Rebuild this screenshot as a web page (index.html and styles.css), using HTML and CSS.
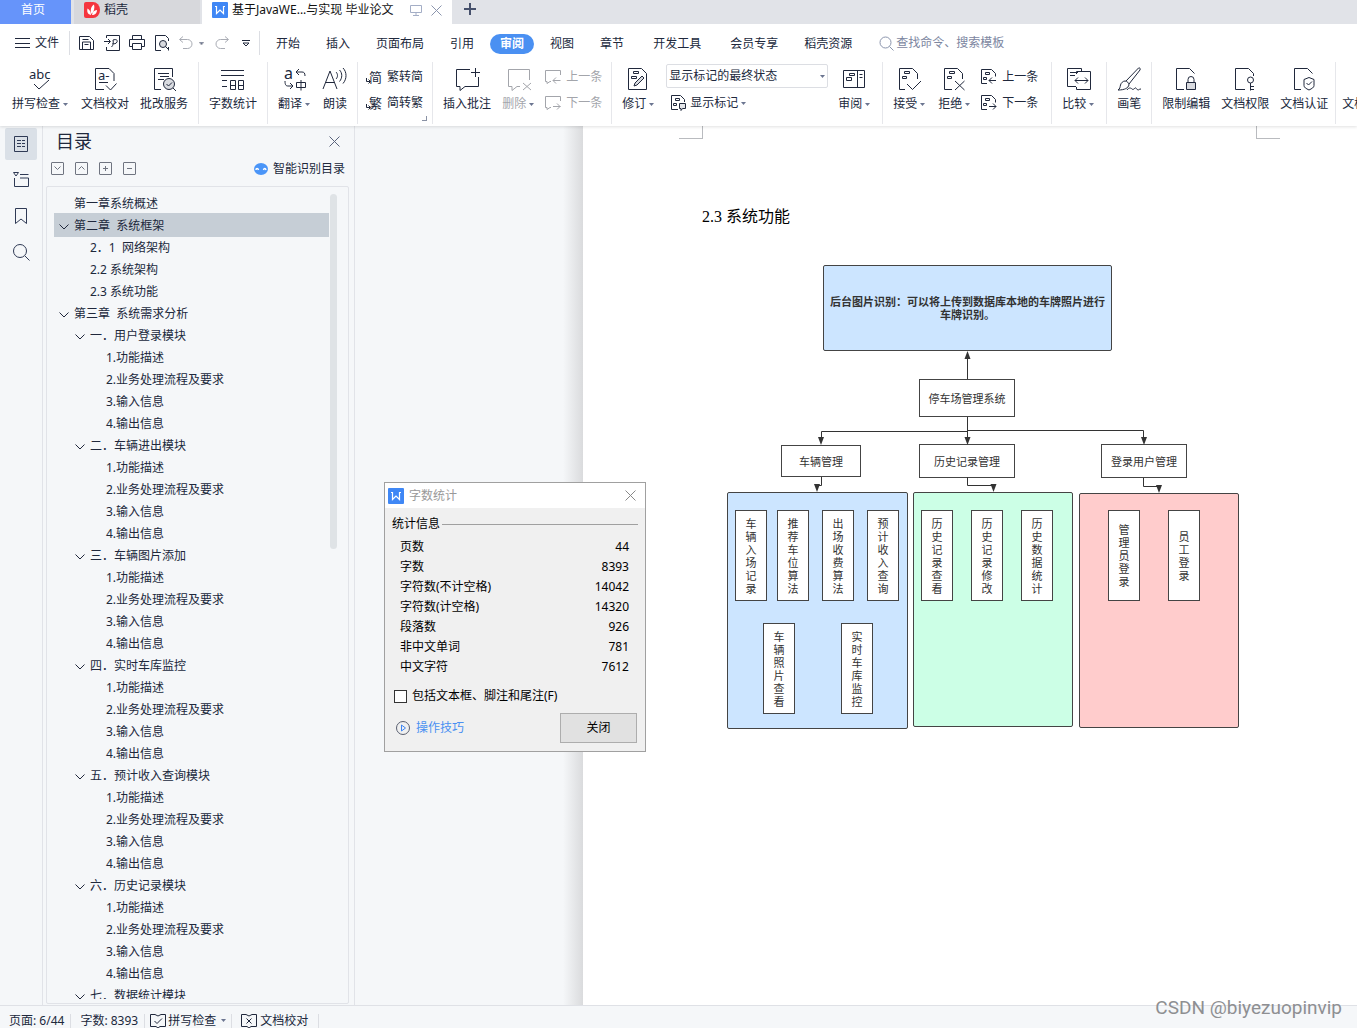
FILE: index.html
```html
<!DOCTYPE html>
<html lang="zh-CN">
<head>
<meta charset="utf-8">
<title>基于JavaWEB 毕业论文</title>
<link rel="stylesheet" href="styles.css">
</head>
<body>
<svg class="defs" aria-hidden="true">
  <symbol id="caret" viewBox="0 0 5 3"><path d="M0 0h5L2.500 3z" fill="#6b7590"/></symbol>
  <symbol id="chev" viewBox="0 0 10 6"><path d="M.5 .5L5 5 9.500 .5"/></symbol>
  <symbol id="x" viewBox="0 0 11 11"><path d="M.5 .5l10 10M10.500 .5l-10 10"/></symbol>
  <symbol id="wps" viewBox="0 0 16 16"><rect width="16" height="16" rx="1" fill="#3f87f5" stroke="none"/><path d="M3 4.500h1.500v7L8 8l3.500 3.500v-7H13" stroke="#fff" stroke-width="1.200"/></symbol>
  <symbol id="prev" viewBox="0 0 16 16"><path d="M6 14.500H.5V.5h10l4 4v3M4.500 3.500h4v2h-4zM2.500 8.500h3v2h-3zM15 11.500H8M11 8.500l-3 3 3 3"/></symbol>
  <symbol id="next" viewBox="0 0 16 16"><path d="M6 14.500H.5V.5h10l4 4v3M4.500 3.500h4v2h-4zM2.500 8.500h3v2h-3zM8 11.500h7M12 8.500l3 3-3 3"/></symbol>
  <symbol id="cprev" viewBox="0 0 16 16"><path d="M6 12.500H5l-3 2v-2H.5v-11h15V6M15.500 11.500H8M11 8.500l-3 3 3 3"/></symbol>
  <symbol id="cnext" viewBox="0 0 16 16"><path d="M6 12.500H5l-3 2v-2H.5v-11h15V6M8 11.500h7.500M12 8.500l3 3-3 3"/></symbol>
</svg>

<header>
  <div class="tabs">
    <button class="tab home">首页</button>
    <button class="tab docer"><svg class="logo" width="16" height="16" viewBox="0 0 16 16"><path d="M0 2a2 2 0 0 1 2-2h7a7 8 0 0 1 0 16H2a2 2 0 0 1-2-2z" fill="#f5363f"/><path d="M7 13C3 12 3 9 3.500 6.500 6 8 7 10 7 13zM7.500 12C6 8 7 4.500 10 2.500c1 3.500 0 7-2.500 9.500zM8 13c.5-3 2-4.500 5-5 0 3-2 5-5 5z" fill="#fff"/></svg>稻壳</button>
    <div class="tab active"><svg width="16" height="16"><use href="#wps"/></svg><span>基于JavaWE...与实现 毕业论文</span>
      <svg class="monitor" width="12" height="12" viewBox="0 0 12 12"><path d="M.5 1.500h11v7H.5zM6 8.500v3M3 11.500h6"/></svg>
      <button class="plain dim" aria-label="关闭标签"><svg width="11" height="11"><use href="#x"/></svg></button></div>
    <button class="plain add" aria-label="新建"><svg width="12" height="12" viewBox="0 0 12 12"><path d="M6 0v12M0 6h12" stroke-width="2"/></svg></button>
  </div>

  <nav class="menu">
    <button class="file"><svg width="15" height="11" viewBox="0 0 15 11"><path d="M0 .5h15M0 5.500h15M0 9.500h15"/></svg><span>文件</span></button>
    <div class="quick">
      <button aria-label="保存"><svg width="16" height="16" viewBox="0 0 16 16"><path d="M.5 1.500h10l4 4v9H.5zM3.500 14v-7h8v7M3.500 4.500h6M5.500 9.500h4"/></svg></button>
      <button aria-label="输出为PDF"><svg width="16" height="16" viewBox="0 0 16 16"><path d="M2.500 3V.5h13v15h-13V12M0 6.500h6M4 4l2.500 2.500L4 9M7.500 12c2-2 2-4 1.500-7 3-1 5 0 4 2s-3 2-4.500 1.500"/></svg></button>
      <button aria-label="打印"><svg width="16" height="16" viewBox="0 0 16 16"><path d="M3.500 4.500v-4h9v4M3.500 11.500h-3v-7h15v7h-3M3.500 8.500h9v6h-9z"/></svg></button>
      <button aria-label="打印预览"><svg width="16" height="16" viewBox="0 0 16 16"><path d="M7 15.500H1.500V.5h10l3 3V6M14.500 12v3.500"/><circle cx="9" cy="9" r="3.500" fill="#d8dadf"/><path d="M11.500 11.500l3.500 3.500"/></svg></button>
      <button class="off" aria-label="撤销"><svg width="14" height="14" viewBox="0 0 14 14"><path d="M4 .5l-3.500 3 3.500 3M1 3.500h7.500a4.500 4.500 0 0 1 0 9H4"/></svg><svg width="5" height="3"><use href="#caret"/></svg></button>
      <button class="off" aria-label="恢复"><svg width="14" height="14" viewBox="0 0 14 14"><path d="M10 .5l3.500 3-3.500 3M13 3.500H5.500a4.500 4.500 0 0 0 0 9H10"/></svg></button>
      <button aria-label="自定义"><svg width="8" height="7" viewBox="0 0 8 7"><path d="M0 .5h8M1 3l3 3 3-3z"/></svg></button>
    </div>
    <div class="menus">
      <button>开始</button><button>插入</button><button>页面布局</button><button>引用</button><button class="current"><span>审阅</span></button><button>视图</button><button>章节</button><button class="wide">开发工具</button><button class="wide">会员专享</button><button>稻壳资源</button>
    </div>
    <label class="search"><svg width="15" height="15" viewBox="0 0 15 15"><circle cx="6.500" cy="6.500" r="5.500"/><path d="M10.500 10.500l4 4"/></svg><input type="text" placeholder="查找命令、搜索模板" aria-label="查找命令"></label>
  </nav>

  <div class="ribbon">
    <div class="group first">
      <button class="big"><svg class="ic" viewBox="0 0 24 24"><text x="0" y="12" class="t13">abc</text><path d="M5 17l5 5L20 13"/></svg><span>拼写检查<svg class="caret"><use href="#caret"/></svg></span></button>
      <button class="big"><svg class="ic" viewBox="0 0 24 24"><path d="M11 22.500H2.500v-21H16l5 5V14M6 15.500h9M13 18.500l4.500 4.500 6-6.500"/><text x="5" y="13" class="t13">a-</text></svg><span>文档校对</span></button>
      <button class="big"><svg class="ic" viewBox="0 0 24 24"><path d="M9 22.500H2.500v-21h18V10M6 6.500h11M8 9.500h9M6 12.500h6"/><circle cx="17" cy="17" r="5.500" fill="#d9dbe0"/><path d="M14.500 17l2 2 3.500-3.500M21 21l3 3"/></svg><span>批改服务</span></button>
    </div>
    <div class="group"><button class="big"><svg class="ic" viewBox="0 0 24 24"><path d="M0 3.500h23M0 8.500h23M1 13.500h5M1 19.500h5M9.500 13.500h5v9h-5zM9.500 18.500h5M17.500 13.500h5v9h-5zM17.500 18.500h5"/></svg><span>字数统计</span></button></div>
    <div class="group">
      <button class="big"><svg class="ic" viewBox="0 0 24 24"><text x="1" y="12" class="t16">a</text><path d="M16 2l-3 3 3 3M13 5h6c2 0 3 1 3 4M2 14c0 4 1 5 3 5h5M7 16l3 3-3 3"/><path d="M13.500 15.500h9v5h-9zM18 13v10.500"/></svg><span>翻译<svg class="caret"><use href="#caret"/></svg></span></button>
      <button class="big"><svg class="ic" viewBox="0 0 24 24"><path d="M0 22L7 4l7 18M3 15.500h8M13 5c2 2 2 5 0 7M16.500 3c3 3 3 8 0 11.500M20 1c4 4 4 11 0 15.500"/></svg><span>朗读</span></button>
    </div>
    <div class="group narrow launcher">
      <div class="stack">
        <button><svg width="16" height="16" viewBox="0 0 16 16"><text x="3" y="13" class="t13">简</text><path d="M.5 9v3.500H4M2.500 10.500l2 2-2 2"/></svg>繁转简</button>
        <button><svg width="16" height="16" viewBox="0 0 16 16"><text x="3" y="13" class="t13">繁</text><path d="M.5 9v3.500H4M2.500 10.500l2 2-2 2"/></svg>简转繁</button>
      </div>
    </div>
    <div class="group note">
      <button class="big"><svg class="ic" viewBox="0 0 24 24"><path d="M15 2.500H1.500v17H5v4l5-4h13.500V10M20.500 1v9M16 5.500h9"/></svg><span>插入批注</span></button>
      <button class="big off"><svg class="ic" viewBox="0 0 24 24"><path d="M13 19.500h-3l-5 4v-4H1.500v-17h21V13M16 16l8 7M24 16l-8 7"/></svg><span>删除<svg class="caret"><use href="#caret"/></svg></span></button>
      <div class="stack off">
        <button><svg width="16" height="16"><use href="#cprev"/></svg>上一条</button>
        <button><svg width="16" height="16"><use href="#cnext"/></svg>下一条</button>
      </div>
    </div>
    <div class="group markup">
      <button class="big"><svg class="ic" viewBox="2 0 24 24"><path d="M3.500 1.500h13l5 5v16h-18zM8.500 4.500h5v2h-5zM6.500 9.500h5v2h-5z"/><path d="M9 19l1-3 7-7 2 2-7 7z" fill="#d9dbe0"/></svg><span>修订<svg class="caret"><use href="#caret"/></svg></span></button>
      <div class="show">
        <div class="pick"><select aria-label="显示状态"><option>显示标记的最终状态</option></select><svg class="caret"><use href="#caret"/></svg></div>
        <button><svg width="16" height="16" viewBox="0 0 16 16"><path d="M7 14.500H.5V.5h9l4 4V7M4.500 3.500h4v2h-4zM2.500 8.500h3v2h-3z"/><path d="M8.500 8.500h6v5h-3l-1.500 2v-2h-1.500z" fill="#e4e6ea"/></svg>显示标记<svg class="caret"><use href="#caret"/></svg></button>
      </div>
      <button class="big"><svg class="ic" viewBox="1 0 24 24"><path d="M1.500 3.500h21v17h-21zM15.500 3v18M7.500 6.500h5v2h-5zM4.500 10.500h5v3h-5zM17.500 7.500h3M17.500 10.500h3"/></svg><span>审阅<svg class="caret"><use href="#caret"/></svg></span></button>
    </div>
    <div class="group accept">
      <button class="big"><svg class="ic" viewBox="2 0 24 24"><path d="M9 22.500H3.500v-21h13l5 5V12M8.500 4.500h5v2h-5zM6.500 9.500h4v2h-4zM11 17l5.500 5.500L25 14"/></svg><span>接受<svg class="caret"><use href="#caret"/></svg></span></button>
      <button class="big"><svg class="ic" viewBox="2 0 24 24"><path d="M11 22.500H3.500v-21h13l5 5V12M8.500 4.500h5v2h-5zM6.500 9.500h4v2h-4zM14 14l9.500 9M23.500 14L14 23"/></svg><span>拒绝<svg class="caret"><use href="#caret"/></svg></span></button>
      <div class="stack">
        <button><svg width="16" height="16"><use href="#prev"/></svg>上一条</button>
        <button><svg width="16" height="16"><use href="#next"/></svg>下一条</button>
      </div>
    </div>
    <div class="group"><button class="big"><svg class="ic" viewBox="0 0 24 24"><path d="M9 19.500H.5v-18h14V5M9.500 7V4.500h14v18h-14V20M3 5.500h8M3 8.500h5M8 13.500h13M11 10.500l-3 3 3 3M18 10.500l3 3-3 3"/></svg><span>比较<svg class="caret"><use href="#caret"/></svg></span></button></div>
    <div class="group"><button class="big"><svg class="ic" viewBox="0 0 24 24"><path d="M9 14L21.500 1c1.500-.5 2 .5 1.500 2L12 17M8 14c2 0 4 2 4 4-1 3-4 5-11 5 2-1 2-3 2.500-5S6 14 8 14zM10 23c2-3 4-2 5-1s2 0 3-1 2 2 3 2 1-1 3-1"/></svg><span>画笔</span></button></div>
    <div class="group protect">
      <button class="big"><svg class="ic" viewBox="0 0 24 24"><path d="M10 22.500H2.500v-21h13l5 5M14 15.500v-3a3 3 0 0 1 6 0v3"/><path d="M12.500 15.500h9v7h-9z" fill="#d9dbe0"/></svg><span>限制编辑</span></button>
      <button class="big"><svg class="ic" viewBox="0 0 24 24"><path d="M12 22.500H2.500v-21h13l5 5V9M17.500 16v7.500M17.500 19.500H21M17.500 22.500H21"/><circle cx="17.500" cy="13" r="3"/></svg><span>文档权限</span></button>
      <button class="big"><svg class="ic" viewBox="0 0 24 24"><path d="M9 22.500H2.500v-21h13l5 5M17 10.500l5 2v6c0 2-2 3-5 4.500-3-1.500-5-2.500-5-4.500v-6zM14.500 16l2 2 3.500-3.500"/></svg><span>文档认证</span></button>
    </div>
    <div class="group more"><button class="big"><svg class="ic" viewBox="0 0 24 24"></svg><span>文档</span></button></div>
  </div>
</header>

<main>
  <aside class="rail">
    <button class="on" aria-label="目录"><svg width="14" height="16" viewBox="0 0 14 16"><path d="M.5 .5h13v15H.5zM3 4.500h4M8 4.500h3M3 7.500h4M8 7.500h3M3 10.500h4M8 10.500h3"/></svg></button>
    <button aria-label="章节"><svg width="16" height="16" viewBox="0 0 16 16"><path d="M.5 .5h5L3 4zM7 2.500h8.500M1.500 6v8.500h14v-8.500H7"/></svg></button>
    <button aria-label="书签"><svg width="12" height="16" viewBox="0 0 12 16"><path d="M.5 .5h11v15L6 11 .5 15.500z"/></svg></button>
    <button aria-label="查找"><svg width="17" height="17" viewBox="0 0 17 17"><circle cx="7" cy="7" r="6.500"/><path d="M12 12l4.500 4.500"/></svg></button>
  </aside>

  <section class="panel">
    <div class="head"><h2>目录</h2><button class="plain" aria-label="关闭目录"><svg width="11" height="11"><use href="#x"/></svg></button></div>
    <div class="tools">
      <button aria-label="展开"><svg width="7" height="4" viewBox="0 0 7 4"><path d="M.5 .5l3 3 3-3"/></svg></button>
      <button aria-label="收起"><svg width="7" height="4" viewBox="0 0 7 4"><path d="M.5 3.500l3-3 3 3"/></svg></button>
      <button aria-label="增加"><svg width="5" height="5" viewBox="0 0 5 5"><path d="M2.500 0v5M0 2.500h5"/></svg></button>
      <button aria-label="减少"><svg width="5" height="5" viewBox="0 0 5 5"><path d="M0 2.500h5"/></svg></button>
      <a href="#toc" class="smart"><svg width="14" height="12" viewBox="0 0 14 12"><ellipse cx="7" cy="6" rx="7" ry="6" fill="#4a95f8"/><path d="M2 7c0-2 2-2 2.500 0M9.500 7c.5-2 2-2 2.500 0" stroke="#fff" stroke-width="1.500"/></svg>智能识别目录</a>
    </div>
    <div class="toc" id="toc">
      <ul>
        <li class="l1">第一章系统概述</li>
        <li class="l1 sel"><svg><use href="#chev"/></svg>第二章  系统框架</li>
        <li class="l2">2．1  网络架构</li>
        <li class="l2">2.2 系统架构</li>
        <li class="l2">2.3 系统功能</li>
        <li class="l1"><svg><use href="#chev"/></svg>第三章  系统需求分析</li>
        <li class="l2"><svg><use href="#chev"/></svg>一．用户登录模块</li>
        <li class="l3">1.功能描述</li><li class="l3">2.业务处理流程及要求</li><li class="l3">3.输入信息</li><li class="l3">4.输出信息</li>
        <li class="l2"><svg><use href="#chev"/></svg>二．车辆进出模块</li>
        <li class="l3">1.功能描述</li><li class="l3">2.业务处理流程及要求</li><li class="l3">3.输入信息</li><li class="l3">4.输出信息</li>
        <li class="l2"><svg><use href="#chev"/></svg>三．车辆图片添加</li>
        <li class="l3">1.功能描述</li><li class="l3">2.业务处理流程及要求</li><li class="l3">3.输入信息</li><li class="l3">4.输出信息</li>
        <li class="l2"><svg><use href="#chev"/></svg>四．实时车库监控</li>
        <li class="l3">1.功能描述</li><li class="l3">2.业务处理流程及要求</li><li class="l3">3.输入信息</li><li class="l3">4.输出信息</li>
        <li class="l2"><svg><use href="#chev"/></svg>五．预计收入查询模块</li>
        <li class="l3">1.功能描述</li><li class="l3">2.业务处理流程及要求</li><li class="l3">3.输入信息</li><li class="l3">4.输出信息</li>
        <li class="l2"><svg><use href="#chev"/></svg>六．历史记录模块</li>
        <li class="l3">1.功能描述</li><li class="l3">2.业务处理流程及要求</li><li class="l3">3.输入信息</li><li class="l3">4.输出信息</li>
        <li class="l2"><svg><use href="#chev"/></svg>七．数据统计模块</li>
      </ul>
      <div class="thumb"></div>
    </div>
  </section>

  <div class="gutter"></div>
  <article class="page">
    <div class="marks"><i></i><i></i></div>
    <h1>2.3 系统功能</h1>
    <div class="diagram">
      <div class="node blue n-back"><b>后台图片识别：可以将上传到数据库本地的车牌照片进行车牌识别。</b></div>
      <div class="node n-root">停车场管理系统</div>
      <div class="node n-car">车辆管理</div>
      <div class="node n-hist">历史记录管理</div>
      <div class="node n-user">登录用户管理</div>
      <div class="node blue n-a"></div><div class="node green n-b"></div><div class="node red n-c"></div>
      <div class="node leaf a1"><span>车辆入场记录</span></div>
      <div class="node leaf a2"><span>推荐车位算法</span></div>
      <div class="node leaf a3"><span>出场收费算法</span></div>
      <div class="node leaf a4"><span>预计收入查询</span></div>
      <div class="node leaf low a5"><span>车辆照片查看</span></div>
      <div class="node leaf low a6"><span>实时车库监控</span></div>
      <div class="node leaf b1"><span>历史记录查看</span></div>
      <div class="node leaf b2"><span>历史记录修改</span></div>
      <div class="node leaf b3"><span>历史数据统计</span></div>
      <div class="node leaf c1"><span>管理员登录</span></div>
      <div class="node leaf c2"><span>员工登录</span></div>
      <svg class="wires" viewBox="0 0 512 464"><path d="M240.500 114V90M240.500 152v24M240.500 166.500H94.500V176M240.500 165.500h176V176M94.500 212v8.500H90V224M240.500 212v8.500h26V224M416.500 213v8.500h15V225"/><path class="tip" d="M240.500 86l3 8h-6zM94 180l-3-8h6zM240.500 180l-3-8h6zM417 180l-3-8h6zM90 227l-3-8h6zM266.500 227l-3-8h6zM432 228l-3-8h6z"/></svg>
    </div>
  </article>
</main>

<footer>
  <span>页面: 6/44</span><span>字数: 8393</span>
  <button class="spell"><svg width="16" height="16" viewBox="0 0 16 16"><path d="M5 1.500H.5v12H6l2 1.500 2-1.500h5.500v-12H11L8 3 5 1.500M4.500 8l2.500 2.500 5-5"/></svg>拼写检查<svg class="caret"><use href="#caret"/></svg></button>
  <button class="proof"><svg width="16" height="16" viewBox="0 0 16 16"><path d="M5 1.500H.5v12H6l2 1.500 2-1.500h5.500v-12H11L8 3 5 1.500M5.500 5.500l5 5M10.500 5.500l-5 5"/></svg>文档校对</button>
</footer>

<div class="dialog" role="dialog" aria-label="字数统计">
  <div class="title"><svg width="16" height="16"><use href="#wps"/></svg><span>字数统计</span><button class="plain" aria-label="关闭窗口"><svg width="11" height="11"><use href="#x"/></svg></button></div>
  <div class="legend">统计信息</div>
  <table>
    <tr><th>页数</th><td>44</td></tr>
    <tr><th>字数</th><td>8393</td></tr>
    <tr><th>字符数(不计空格)</th><td>14042</td></tr>
    <tr><th>字符数(计空格)</th><td>14320</td></tr>
    <tr><th>段落数</th><td>926</td></tr>
    <tr><th>非中文单词</th><td>781</td></tr>
    <tr><th>中文字符</th><td>7612</td></tr>
  </table>
  <label class="check"><input type="checkbox">包括文本框、脚注和尾注(F)</label>
  <div class="actions"><a href="#tips"><svg width="14" height="14" viewBox="0 0 14 14"><circle cx="7" cy="7" r="6.500" stroke="#5a6070"/><path d="M5.500 4v6l4-3z" stroke="#3f87f5"/></svg>操作技巧</a><button>关闭</button></div>
</div>
<div class="watermark">CSDN @biyezuopinvip</div>
</body>
</html>
```
FILE: styles.css
```css
* { box-sizing: border-box; }
html, body { height: 100%; }
body {
  margin: 0;
  display: flex;
  flex-direction: column;
  position: relative;
  overflow: hidden;
  background: #f5f7f9;
  color: #20283c;
  font: 12px/16px "Noto Sans", "Noto Sans CJK SC", sans-serif;
}
button {
  margin: 0;
  padding: 0;
  border: 0;
  background: none;
  color: inherit;
  font: inherit;
  white-space: nowrap;
}
a { color: inherit; text-decoration: none; }
svg { display: block; flex: none; fill: none; stroke: currentColor; overflow: visible; }
svg text { fill: currentColor; stroke: none; }
.t13 { font-size: 13px; }
.t16 { font-size: 16px; }
.logo { stroke: none; }
.defs { position: absolute; width: 0; height: 0; }
.caret { width: 5px; height: 3px; margin: 0 2px 0 3px; stroke: none; }
.plain { display: flex; color: #59637c; }
.dim { color: #8b95ad; }

header { background: #fff; position: relative; box-shadow: 0 1px 3px #0000001f; z-index: 1; }

/* document tabs */
.tabs { display: flex; height: 24px; background: #e1e3e8; }
.tab { display: flex; align-items: center; padding-bottom: 4px; }
.home { width: 71px; justify-content: center; padding-right: 5px; margin-right: 3px; background: #6694fa; color: #fff; }
.docer { width: 126px; gap: 4px; padding-left: 10px; margin-right: 2px; background: #d7d8dc; }
.active { width: 250px; padding-left: 10px; background: #fff; color: #111; }
.active span { width: 166px; margin: 0 12px 0 4px; white-space: nowrap; }
.monitor { margin-right: 9px; color: #a4aec6; }
.add { padding: 3px 12px; color: #46516c; }

/* menu row */
.menu { display: flex; align-items: center; height: 38px; }
.file { display: flex; align-items: center; gap: 5px; height: 24px; padding: 0 10px 0 15px; border-right: 1px solid #dcdee3; }
.quick { display: flex; align-items: center; gap: 9px; height: 24px; padding: 0 9px 0 9px; border-right: 1px solid #dcdee3; }
.quick button { display: flex; align-items: center; gap: 6px; }
.quick button.off { color: #a9acb4; margin-right: 2px; }
.quick button:last-child { margin-left: 2px; }
.menus { display: flex; align-items: center; padding: 2px 0 0 3px; }
.menus button { padding: 0 13px; }
.menus .wide { margin-left: 3px; }
.menus .current { padding: 0 3px; color: #fff; font-weight: bold; }
.current span { display: block; padding: 2px 10px; border-radius: 10px; background: #4a90f2; }
.search { display: flex; align-items: center; padding-left: 14px; color: #8b95ad; }
.search input { width: 140px; padding: 0; margin-left: 2px; border: 0; background: none; font: inherit; color: inherit; outline: 0; }
.search input::placeholder { color: #7c869f; opacity: 1; }

/* ribbon */
.ribbon { display: flex; height: 64px; padding-bottom: 2px; overflow: hidden; }
.group { display: flex; flex: none; gap: 11px; padding: 0 10px; border-right: 1px solid #e6e7eb; }
.group.first { padding-left: 12px; }
.group.narrow { padding: 0 9px 0 8px; }
.group.note { padding-right: 9px; }
.group.markup { gap: 10px; }
.group.accept { padding-right: 13px; }
.group.protect { padding-right: 7px; }
.group.more { padding: 0 0 0 6px; border: 0; }
.big { display: flex; flex-direction: column; align-items: center; padding-top: 5px; gap: 5px; }
.big > span { display: flex; align-items: center; }
.ic { width: 24px; height: 24px; }
.off { color: #a3a5ab; }
.stack { display: flex; flex-direction: column; gap: 10px; padding-top: 7px; }
.big + .stack { margin-left: -2px; }
.stack button { display: flex; align-items: center; gap: 5px; }
.launcher { background: linear-gradient(#8a92a5, #8a92a5) right 5px bottom 3px / 5px 1px no-repeat, linear-gradient(#8a92a5, #8a92a5) right 5px bottom 3px / 1px 5px no-repeat; }
.show { display: flex; flex-direction: column; gap: 7px; padding-top: 2px; }
.pick { display: flex; align-items: center; width: 162px; height: 24px; border: 1px solid #dcdee3; border-radius: 2px; }
.pick select { flex: 1; appearance: none; padding: 0 2px; border: 0; background: none; font: inherit; color: inherit; }
.show button { display: flex; align-items: center; gap: 3px; padding-left: 5px; }
.show button .caret { margin: 0; }

/* work area */
main { display: flex; flex: 1; min-height: 0; }
.rail { display: flex; flex-direction: column; gap: 4px; width: 43px; padding: 2px 5px; border-right: 1px solid #e1e3e8; }
.rail button { display: flex; align-items: center; justify-content: center; height: 32px; border-radius: 2px; color: #2f3a55; }
.rail .on { background: #dae0e7; }
.panel { display: flex; flex-direction: column; width: 312px; border-right: 1px solid #e1e3e8; }
.head { display: flex; align-items: center; justify-content: space-between; height: 30px; padding: 0 14px 0 13px; }
.head h2 { margin: 0; font-size: 18px; line-height: 24px; font-weight: normal; }
.tools { display: flex; align-items: center; gap: 11px; height: 24px; margin-bottom: 6px; padding: 0 9px 0 8px; }
.tools button { display: flex; align-items: center; justify-content: center; width: 13px; height: 13px; border: 1px solid #6f7480; border-radius: 1px; color: #6f7480; }
.smart { display: flex; align-items: center; gap: 5px; margin-left: auto; padding-top: 1px; }
.smart svg { stroke: none; }
.toc { display: flex; flex: 1; min-height: 0; margin: 0 5px 1px 3px; padding: 6px 11px 4px 7px; border: 1px solid #e1e3e8; border-radius: 2px; }
.toc ul { flex: 1; margin: 0; padding: 0; overflow: hidden; list-style: none; }
.toc li { display: flex; align-items: center; height: 22px; white-space: pre; }
.toc li svg { width: 10px; height: 6px; margin: 2px 5px 0 -15px; }
.l1 { padding-left: 20px; }
.l2 { padding-left: 36px; }
.l3 { padding-left: 52px; }
.sel { background: #c6ced6; box-shadow: 0 -2px #c6ced6; }
.thumb { width: 7px; height: 44%; margin: 1px 0 0 1px; border-radius: 4px; background: #dfe3e6; }

.gutter { width: 228px; background: linear-gradient(to right, #f5f7f9 208px, #dadbdd 228px); }
.page { flex: 1; min-width: 0; background: #fff; }
.marks { display: flex; justify-content: space-between; margin: 0 77px 0 96px; }
.marks i { width: 24px; height: 13px; border: 0 solid #b9bbbf; border-bottom-width: 1px; }
.marks i:first-child { border-right-width: 1px; }
.marks i:last-child { border-left-width: 1px; }
.page h1 { margin: 66px 0 36px 119px; color: #000; font: 16px/24px "Liberation Serif", "Noto Sans CJK SC", serif; }

/* module diagram */
.diagram { position: relative; width: 512px; height: 464px; margin-left: 144px; color: #333; font-size: 11px; line-height: 13px; }
.node { position: absolute; display: flex; align-items: center; justify-content: center; border: 1px solid #444; background: #fff; text-align: center; }
.blue, .green, .red { border-radius: 2px; }
.blue { background: #cce5ff; }
.green { background: #ccffe6; }
.red { background: #ffcccc; }
.n-back { left: 96px; top: 0; width: 289px; height: 86px; padding: 0 5px; }
.n-root { left: 192px; top: 114px; width: 96px; height: 38px; }
.n-car { left: 54px; top: 180px; width: 80px; height: 32px; }
.n-hist { left: 192px; top: 179px; width: 96px; height: 34px; }
.n-user { left: 374px; top: 179px; width: 86px; height: 34px; }
.n-a { left: 0; top: 227px; width: 181px; height: 237px; }
.n-b { left: 186px; top: 227px; width: 160px; height: 235px; }
.n-c { left: 352px; top: 228px; width: 160px; height: 235px; }
.leaf { top: 245px; width: 32px; height: 91px; }
.leaf span { width: 11px; }
.low { top: 358px; }
.a1 { left: 8px; }
.a2 { left: 50px; }
.a3 { left: 95px; }
.a4 { left: 140px; }
.a5 { left: 36px; }
.a6 { left: 114px; }
.b1 { left: 194px; }
.b2 { left: 244px; }
.b3 { left: 294px; }
.c1 { left: 381px; }
.c2 { left: 441px; }
.wires { position: absolute; inset: 0; width: 512px; height: 464px; }
.tip { fill: #333; stroke: none; }

/* status bar */
footer { display: flex; align-items: center; height: 23px; padding: 7px 0 0 9px; border-top: 1px solid #dfe1e6; }
footer span, footer button { display: flex; align-items: center; height: 14px; border-right: 1px solid #dcdee3; }
footer span { padding-right: 6px; margin-right: 9px; white-space: nowrap; }
.spell { gap: 2px; margin-left: -4px; padding-right: 3px; }
.proof { gap: 3px; margin-left: 9px; padding-right: 10px; }

/* word count window */
.dialog { position: absolute; z-index: 2; left: 384px; top: 482px; width: 262px; height: 270px; border: 1px solid #a0a0a0; background: #f0f0f0; color: #000; }
.title { display: flex; align-items: center; gap: 5px; height: 25px; padding: 0 9px 0 3px; background: #fff; color: #999; }
.title button { margin-left: auto; color: #888; }
.legend { display: flex; align-items: center; gap: 2px; margin: 8px 7px 5px; }
.legend::after { content: ""; flex: 1; height: 1px; background: #a0a0a0; }
.dialog table { width: 100%; border-collapse: collapse; }
.dialog th { padding: 2px 0 2px 15px; text-align: left; font-weight: normal; }
.dialog td { padding: 2px 16px 2px 0; text-align: right; }
.check { display: flex; align-items: center; gap: 5px; margin: 11px 9px 9px; }
.check input { appearance: none; width: 13px; height: 13px; margin: 0; border: 1px solid #333; background: #fff; }
.actions { display: flex; align-items: center; justify-content: space-between; padding: 0 8px 0 11px; }
.actions a { display: flex; align-items: center; gap: 6px; color: #4a90f2; }
.actions button { width: 77px; height: 30px; border: 1px solid #adadad; background: #e1e1e1; }

.watermark { position: absolute; z-index: 2; right: 15px; bottom: 8px; color: #8e8f92; font: 19px/24px Roboto, "Liberation Sans", sans-serif; }
```
